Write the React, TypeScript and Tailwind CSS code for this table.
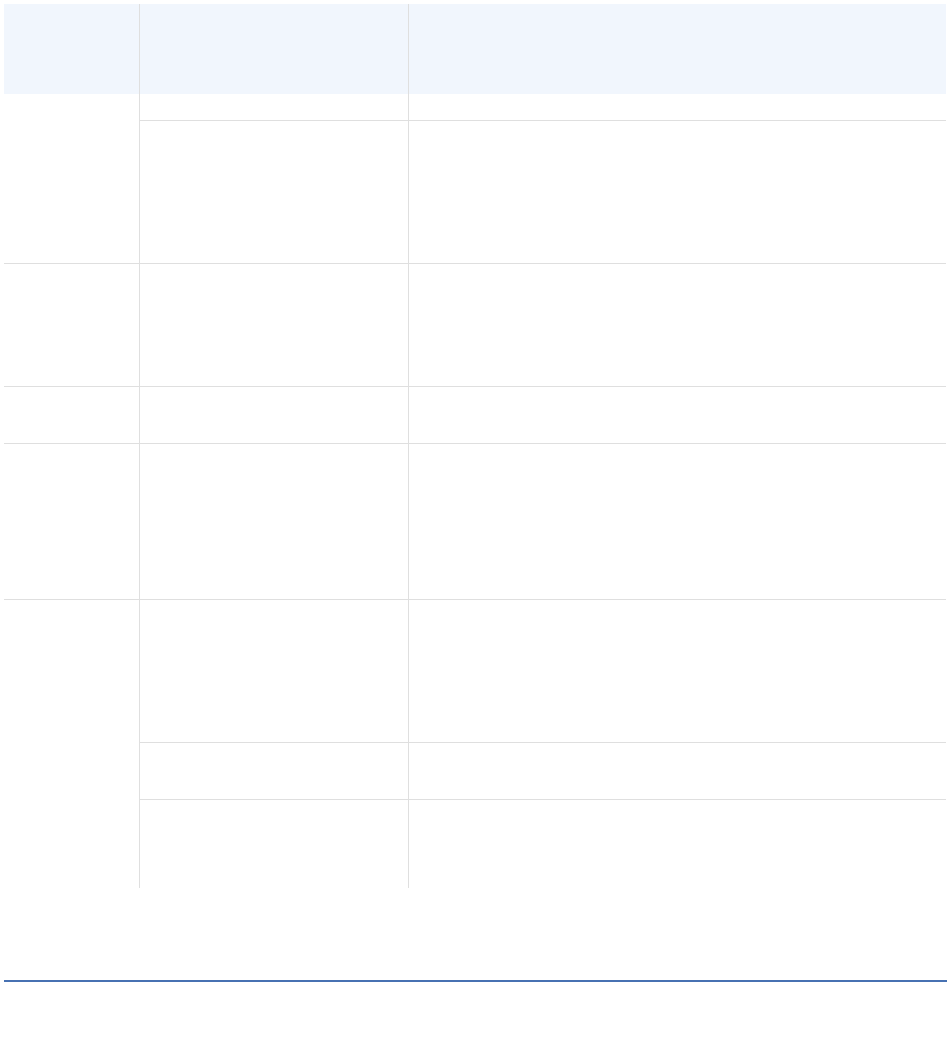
import React from "react";

const line = "border-[#dfdfdf]";

function Right({ rows }: { rows: { h: string; top: boolean }[] }) {
  return (
    <div className="flex w-[807px] flex-col">
      {rows.map((r, i) => (
        <div key={i} className={`flex ${r.h} ${r.top ? `border-t ${line}` : ""}`}>
          <div className={`w-[269px] border-l ${line}`} />
          <div className={`flex-1 border-l ${line}`} />
        </div>
      ))}
    </div>
  );
}

function Group({ top, rows }: { top: boolean; rows: { h: string; top: boolean }[] }) {
  return (
    <div className={`flex ${top ? `border-t ${line}` : ""}`}>
      <div className="w-[135px]" />
      <Right rows={rows} />
    </div>
  );
}

export default function App() {
  return (
    <div className="min-h-[1045px] bg-white pl-1 pt-1" style={{ fontFamily: '"Liberation Sans", Arial, sans-serif' }}>
      <div className="w-[942px]">
        <div className="flex h-[90px] bg-[#f1f6fd]">
          <div className="w-[135px]" />
          <div className={`w-[269px] border-l ${line}`} />
          <div className={`flex-1 border-l ${line}`} />
        </div>
        <Group
          top={false}
          rows={[
            { h: "h-[26px]", top: false },
            { h: "h-[143px]", top: true },
          ]}
        />
        <Group top rows={[{ h: "h-[122px]", top: false }]} />
        <Group top rows={[{ h: "h-[56px]", top: false }]} />
        <Group top rows={[{ h: "h-[155px]", top: false }]} />
        <Group
          top
          rows={[
            { h: "h-[142px]", top: false },
            { h: "h-[57px]", top: true },
            { h: "h-[89px]", top: true },
          ]}
        />
      </div>
      <div className="mt-[92px] h-[2px] w-[943px] bg-[#4771b2]" />
    </div>
  );
}
